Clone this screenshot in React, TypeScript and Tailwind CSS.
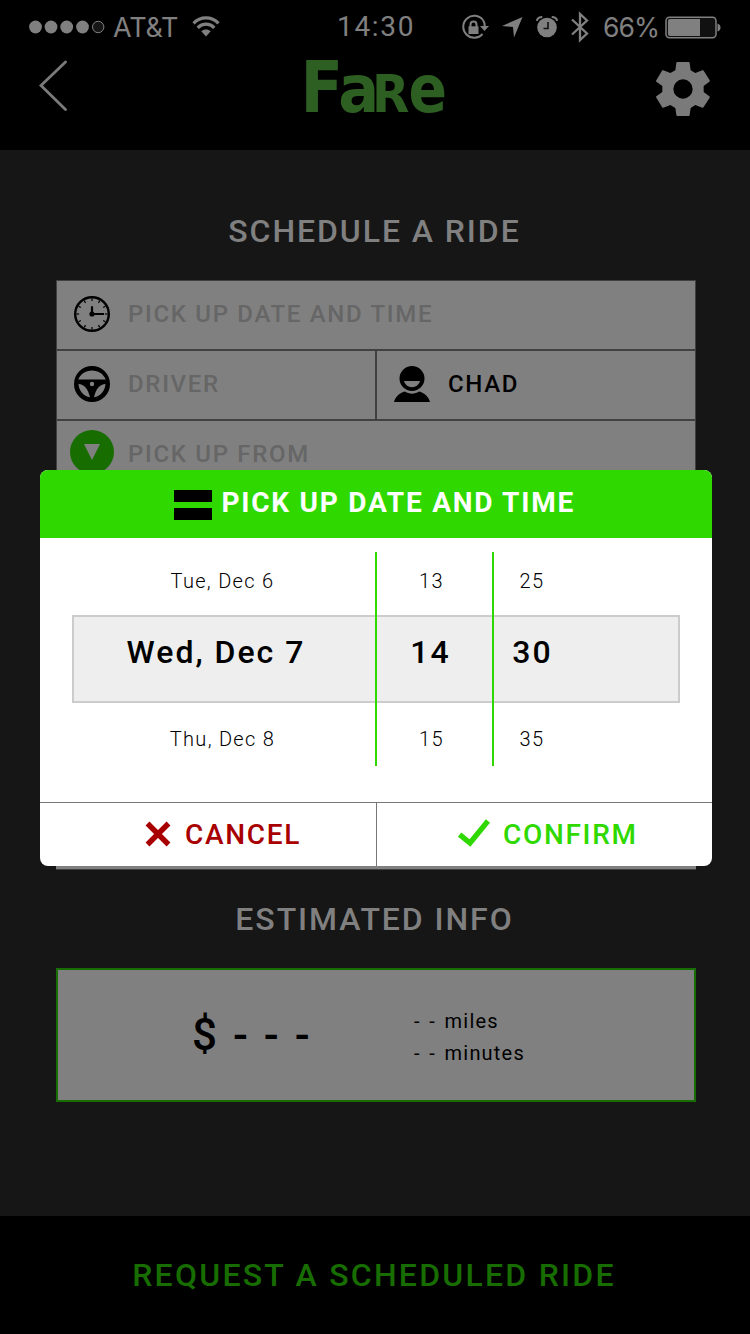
import type { ReactNode } from 'react';

const hours = ['13', '14', '15'];
const minutes = ['25', '30', '35'];
const days = ['Tue, Dec 6', 'Wed, Dec 7', 'Thu, Dec 8'];

function ClockIcon() {
  const ticks = [0, 30, 60, 90, 120, 150, 180, 210, 240, 270, 300, 330];
  return (
    <svg className="h-9 w-9" viewBox="0 0 36 36" fill="none" stroke="#000">
      <circle cx="18" cy="18" r="16.8" strokeWidth="2.4" />
      {ticks.map((angle) => (
        <path key={angle} d="M18 2.5v2.6" strokeWidth="1.2" transform={`rotate(${angle} 18 18)`} />
      ))}
      <path d="M18 10.300V18h12" strokeWidth="2.2" />
      <circle cx="18" cy="18" r="2.6" fill="#000" stroke="none" />
    </svg>
  );
}

function WheelIcon() {
  return (
    <svg className="h-9 w-9" viewBox="0 0 36 36">
      <path
        fillRule="evenodd"
        d="M18 0a18 18 0 1 0 0 36 18 18 0 0 0 0-36zM4.300 13.500C6.300 8.300 11.500 4.500 18 4.500s11.700 3.800 13.700 9zM4.500 18c5.500.2 9.500 4.500 11.500 13.200C9.500 30.200 5 25 4.500 18zM31.500 18c-.5 7-5 12.200-11.500 13.200 2-8.700 6-13 11.500-13.200z"
      />
      <circle cx="18" cy="18" r="2.2" fill="#808080" />
    </svg>
  );
}

function RiderIcon() {
  return (
    <svg className="h-9 w-9" viewBox="0 0 36 36">
      <circle cx="18" cy="12.500" r="12.500" fill="#000" />
      <path d="M10 15h16a8.100 7.500 0 0 1-16 0z" fill="#808080" />
      <path d="M0 36c1.500-5 5.500-9.300 11-10.400 4 2.800 10 2.800 14 0C30.500 26.700 34.500 31 36 36z" fill="#000" />
    </svg>
  );
}

function GearIcon() {
  return (
    <svg className="h-[54px] w-[54px]" viewBox="0 0 162 162" fill="#7a7a7a">
      <path
        fillRule="evenodd"
        d="M64 0h34q3 0 3 3l3 22 14 8 21-8q3-1 4 1l18 29q1 3-1 4l-17 13v18l17 13q2 1 1 4l-18 28q-2 3-4 2l-21-8-14 9-3 21q0 3-3 3H64q-3 0-3-3l-3-21-15-9-21 8q-3 1-4-2L1 107q-2-3 0-4l18-13V72L1 59q-2-1 0-4l17-29q1-2 4-1l21 8 15-8 3-22q0-3 3-3zM81 52a29 29 0 1 0 0 58 29 29 0 0 0 0-58z"
      />
    </svg>
  );
}

function Logo() {
  return (
    <svg
      className="ml-[27px] h-[70px] w-[142px] overflow-visible"
      viewBox="0 0 142 70"
      fill="#2d5f22"
      fontFamily="DejaVu Sans"
      fontWeight="700"
    >
      <text x="-4.600" y="58" fontSize="71" textLength="42.600" lengthAdjust="spacingAndGlyphs">F</text>
      <text x="33.200" y="58" fontSize="66" textLength="41" lengthAdjust="spacingAndGlyphs">a</text>
      <text x="67" y="58" fontSize="51" textLength="37.400" lengthAdjust="spacingAndGlyphs">R</text>
      <text x="103.500" y="58" fontSize="66" textLength="38.500" lengthAdjust="spacingAndGlyphs">e</text>
    </svg>
  );
}

function StatusBar() {
  return (
    <div className="flex h-[54px] items-center text-[28px] leading-none text-[#808080]">
      <div className="flex w-[337px] items-center pl-[29px]">
        <svg className="h-[14px] w-[76px]" viewBox="0 0 76 14" fill="#808080">
          <circle cx="6.500" cy="7" r="6.400" />
          <circle cx="22" cy="7" r="6.400" />
          <circle cx="37.700" cy="7" r="6.400" />
          <circle cx="53.500" cy="7" r="6.400" />
          <circle cx="69.200" cy="7" r="5.700" fill="#161616" stroke="#808080" strokeWidth="1" />
        </svg>
        <span className="ml-[8px] w-[79px] font-['Inter',sans-serif] text-[27px] tracking-[-0.2px]">AT&amp;T</span>
        <svg className="h-[22px] w-[28px]" viewBox="0 0 28 22" fill="none" stroke="#808080" strokeWidth="3.2">
          <path d="M1.500 7.300c7-7.300 18-7.300 25 0" />
          <path d="M5.700 11.800c4.700-4.800 12-4.800 16.600 0" />
          <path d="M9.300 15.300c2.800-2.400 6.600-2.400 9.400 0L14 20.500z" fill="#808080" stroke="none" />
        </svg>
      </div>
      <span className="w-[125px] tracking-[1.7px]">14:30</span>
      <svg className="h-[26px] w-[28px]" viewBox="0 0 28 26" fill="none" stroke="#808080" strokeWidth="2">
        <path d="M21 6A11 11 0 1 0 20.500 20" />
        <path d="M21 6a11 11 0 0 1 1.700 6" />
        <path d="M18 12h9l-4.500 5z" fill="#808080" stroke="none" />
        <path d="M8.500 13v-2.500a3 3 0 0 1 6 0V13" />
        <path d="M6.500 12.300h10V20h-10z" fill="#808080" stroke="none" />
      </svg>
      <svg className="ml-[12px] h-[22px] w-[22px]" viewBox="0 0 22 22" fill="#808080">
        <path d="M20.500 1 12 21.500 11 11 0 10z" />
      </svg>
      <svg className="ml-[12px] h-[22px] w-[22px]" viewBox="0 0 22 22" fill="none" stroke="#808080">
        <circle cx="11" cy="11.500" r="9.800" fill="#808080" stroke="none" />
        <path d="M.8 4.800C1.300 2.500 3.500 1 6.300 1M21.200 4.800C20.700 2.500 18.500 1 15.700 1" strokeWidth="2" />
        <path d="M12 6v6.500H7.500" stroke="#111" strokeWidth="1.600" />
      </svg>
      <svg className="ml-[13px] h-[32px] w-[18px]" viewBox="0 0 18 32" fill="none" stroke="#808080" strokeWidth="2.300">
        <path d="m1 8.500 15 14-7 6.500V3l7 6.500L1 23.500" />
      </svg>
      <span className="ml-[14px] w-[62px] font-['Inter',sans-serif] text-[26.5px] tracking-[-0.9px]">66%</span>
      <svg className="h-[23px] w-[56px]" viewBox="0 0 56 23">
        <rect x="1" y="1.200" width="50" height="20.500" rx="3.500" fill="#111" stroke="#808080" strokeWidth="1.500" />
        <path d="M3 5q0-2 2-2h30v17H5q-2 0-2-2z" fill="#808080" />
        <path d="M52.500 7.500q3 1 3 4t-3 4z" fill="#808080" />
      </svg>
    </div>
  );
}

function Header() {
  return (
    <header className="h-[150px] bg-black">
      <StatusBar />
      <div className="flex items-start justify-between pr-10 pl-[39px]">
        <svg className="mt-[6px] h-[52px] w-[30px]" viewBox="0 0 30 52" fill="none" stroke="#7a7a7a" strokeWidth="2.800">
          <path d="M26.500 2 2 25.500 26.500 49.500" strokeLinecap="round" />
        </svg>
        <Logo />
        <div className="mt-2">
          <GearIcon />
        </div>
      </div>
    </header>
  );
}

function Field({ icon, children, active }: { icon: ReactNode; children: ReactNode; active?: boolean }) {
  return (
    <div className="flex h-[70px] flex-1 items-center border border-[#404040] pb-[2px]">
      <div className="flex w-[71px] justify-center pr-[2px]">{icon}</div>
      <span className={active ? 'text-black' : 'text-[#666666]'}>{children}</span>
    </div>
  );
}

function PickerColumn({ values, className }: { values: string[]; className: string }) {
  const [before, current, after] = values;
  return (
    <div className={`flex flex-col items-center text-[20px] font-light tracking-[1.3px] text-black ${className}`}>
      <span className="flex h-[58px] items-center">{before}</span>
      <span className="flex h-[84px] items-center text-[32px] font-medium tracking-[2px]">{current}</span>
      <span className="flex h-[72px] items-center pt-[18px]">{after}</span>
    </div>
  );
}

function DateTimeModal() {
  return (
    <div className="absolute top-[470px] left-10 h-[396px] w-[672px] overflow-hidden rounded-lg bg-white">
      <div className="flex h-[68px] bg-[#2fd900] pl-[134px]">
        <div className="mt-5 flex w-[38px] flex-col gap-[6px]">
          <div className="h-3 bg-black" />
          <div className="h-3 bg-black" />
        </div>
        <h2 className="ml-[9.5px] pt-3 text-[28px] leading-[42px] font-bold tracking-[1.75px] whitespace-nowrap text-white">
          PICK UP DATE AND TIME
        </h2>
      </div>
      <div className="relative flex h-[264px] items-start pt-[14px] pl-8">
        <div className="absolute top-[77px] left-8 h-[88px] w-[608px] border-2 border-[#cccccc] bg-[#eeeeee]" />
        <PickerColumn
          values={days}
          className="relative h-[214px] w-[305px] border-r-2 border-[#2fd900] pr-[2px] [&>span:nth-child(2)]:pr-[13px]"
        />
        <PickerColumn
          values={hours}
          className="relative h-[214px] w-[117px] border-r-2 border-[#2fd900] pr-[6px] [&>span:nth-child(2)]:pr-[2px]"
        />
        <PickerColumn values={minutes} className="relative w-[76px] [&>span:nth-child(2)]:pl-[1px]" />
      </div>
      <div className="flex h-16 border-t border-[#777777] text-[28px] font-medium tracking-[1.68px]">
        <button className="flex w-[337px] items-center border-r border-[#777777] pl-[105px] text-[#a80000]">
          <svg className="mb-[2px] h-[26px] w-[26px]" viewBox="0 0 26 26" stroke="#a80000" strokeWidth="5.400">
            <path d="m2.500 2.500 21 21m0-21-21 21" />
          </svg>
          <span className="ml-[14px]">CANCEL</span>
        </button>
        <button className="flex items-center pl-[81px] text-[#2fd900]">
          <svg className="mb-[4px] h-[28px] w-[32px]" viewBox="0 0 32 28" fill="none" stroke="#2fd900" strokeWidth="5.400">
            <path d="m1.600 15.500 10.400 8.500L30 2" />
          </svg>
          <span className="ml-[13px]">CONFIRM</span>
        </button>
      </div>
    </div>
  );
}

export default function App() {
  return (
    <div className="relative flex h-[1334px] w-[750px] flex-col overflow-hidden bg-[#161616] font-['Roboto',sans-serif]">
      <Header />
      <main className="flex flex-1 flex-col px-14">
        <h1 className="mt-[60px] pr-[1px] text-center text-[32px] leading-[42px] font-medium tracking-[1.92px] text-[#808080]">
          SCHEDULE A RIDE
        </h1>
        {/* Ride form */}
        <div className="mt-[28px] h-[590px] w-[640px] border-b border-[#404040] bg-[#808080] text-[24px] font-medium tracking-[1.68px]">
          <Field icon={<ClockIcon />}>PICK UP DATE AND TIME</Field>
          <div className="flex">
            <Field icon={<WheelIcon />}>DRIVER</Field>
            <Field icon={<RiderIcon />} active>
              CHAD
            </Field>
          </div>
          <Field
            icon={
              <svg className="mb-[4px] h-[44px] w-[44px]" viewBox="0 0 44 44">
                <circle cx="22" cy="22" r="22" fill="#186d00" />
                <path d="M14 14h16l-8 16z" fill="#808080" />
              </svg>
            }
          >
            PICK UP FROM
          </Field>
        </div>
        {/* Estimate */}
        <h2 className="mt-[28px] pr-[1px] text-center text-[32px] leading-[42px] font-medium tracking-[1.92px] text-[#808080]">
          ESTIMATED INFO
        </h2>
        <div className="mt-[28px] flex h-[134px] w-[640px] items-center border-2 border-[#186d00] bg-[#808080] text-black">
          <span className="w-[356px] pl-[134px] text-[44px] font-medium tracking-[2.2px] whitespace-nowrap [word-spacing:0.600px]">
            $ - - -
          </span>
          <div className="pt-[4px] text-[20px] leading-8 tracking-[1.2px] [word-spacing:2.400px]">
            <p>- - miles</p>
            <p>- - minutes</p>
          </div>
        </div>
      </main>
      <footer className="flex h-[118px] items-center justify-center bg-black pr-[2px] text-[32px] font-medium tracking-[2.24px] text-[#186d00]">
        REQUEST A SCHEDULED RIDE
      </footer>
      <DateTimeModal />
    </div>
  );
}
